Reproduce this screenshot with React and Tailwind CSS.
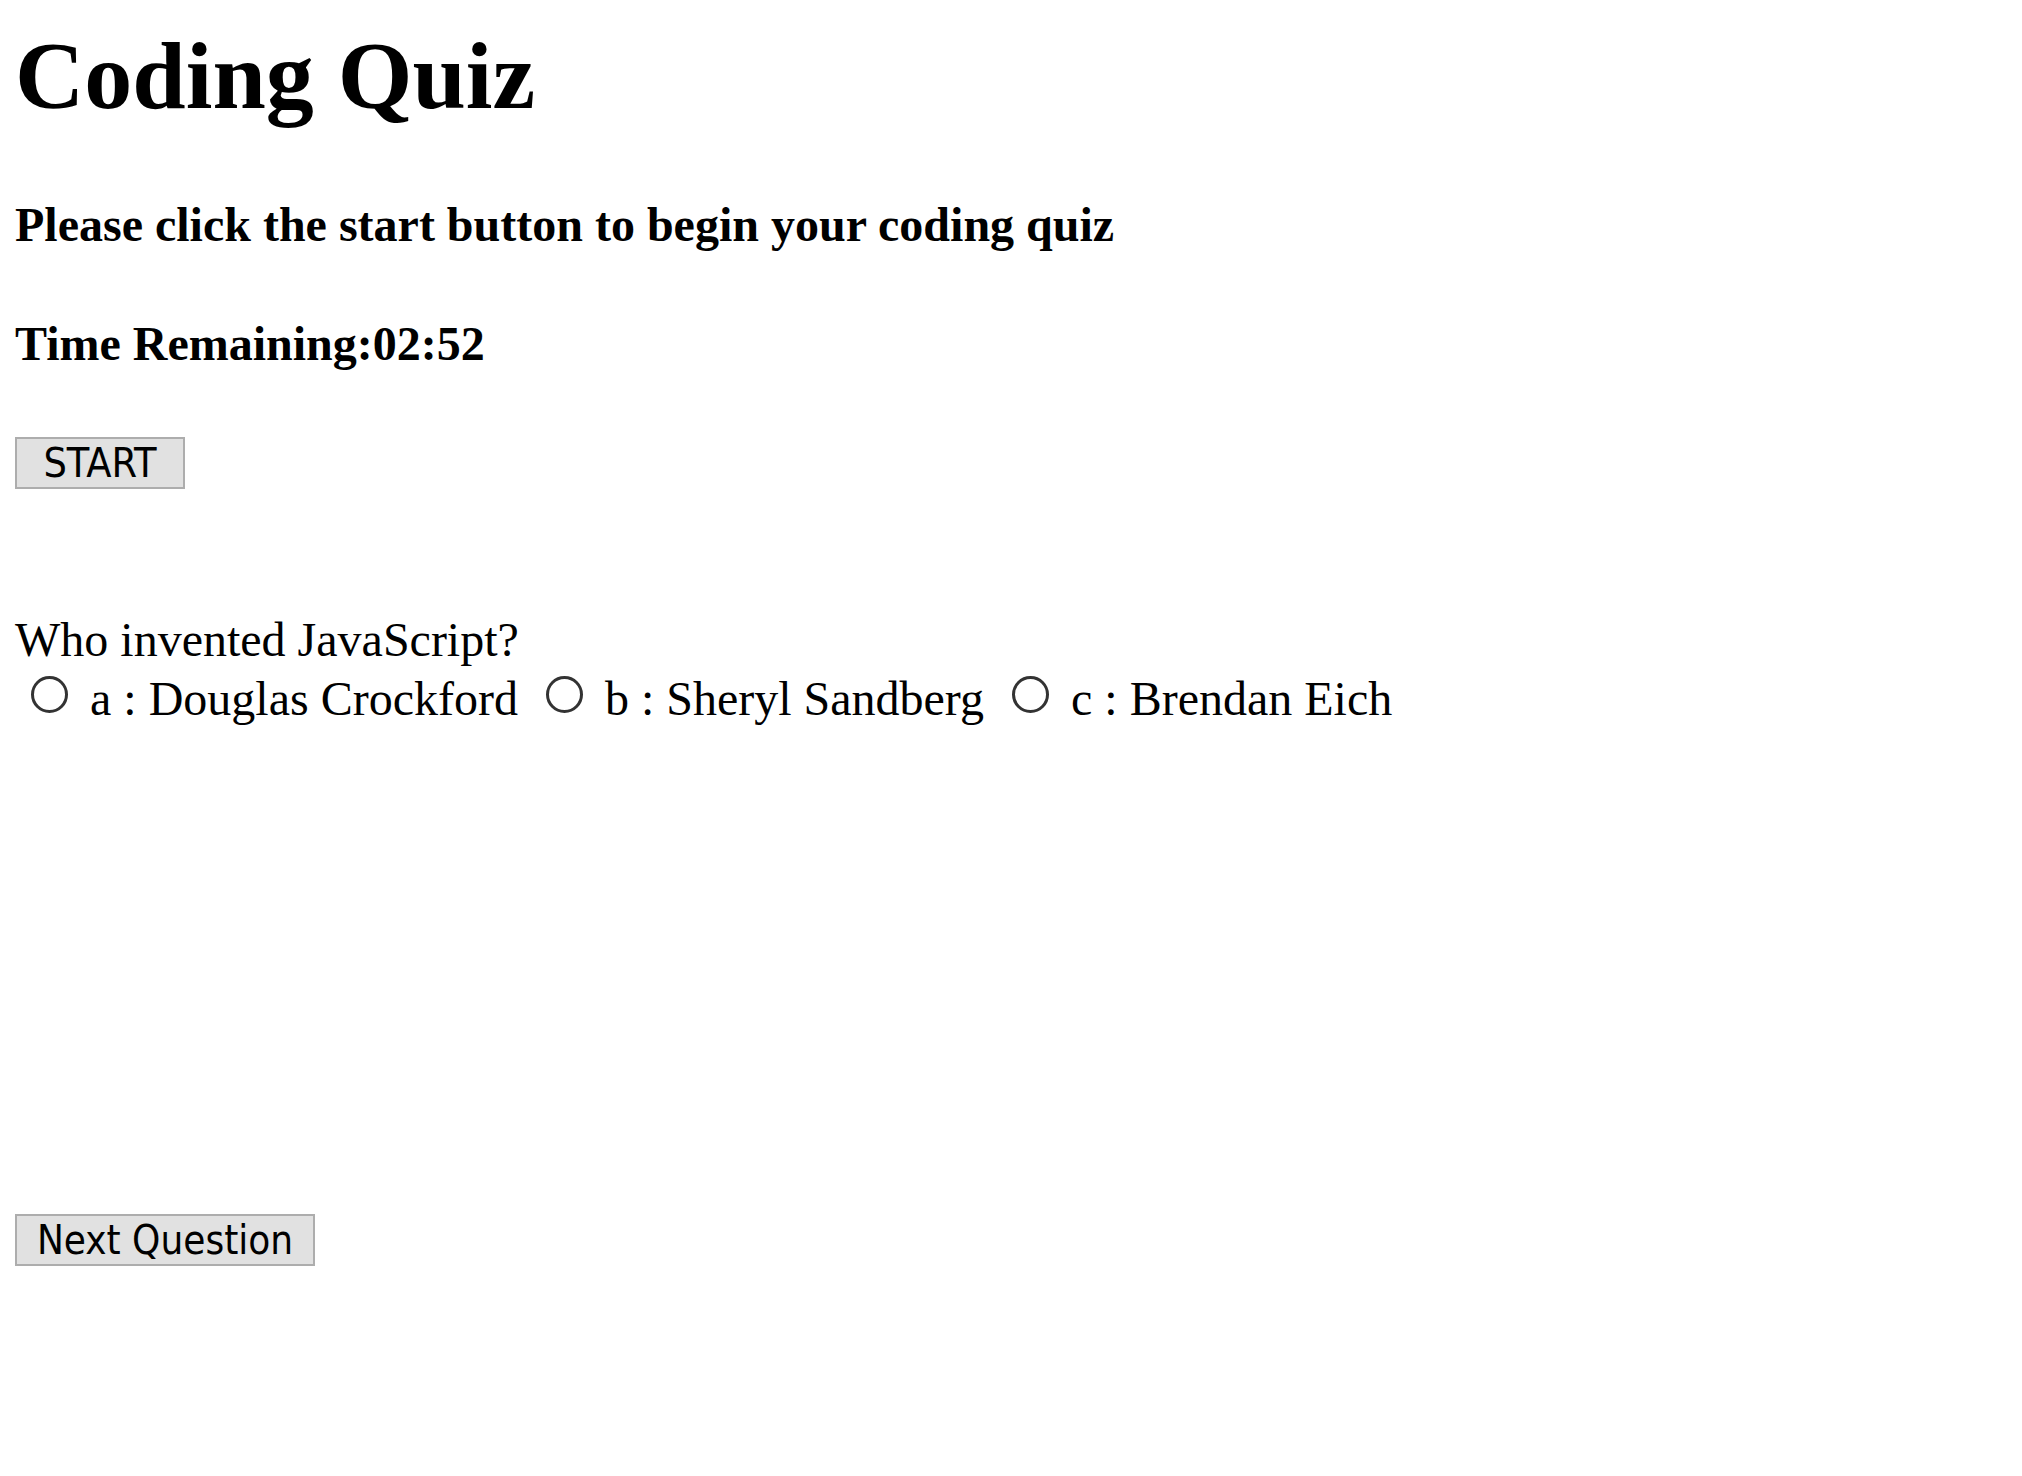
import React from 'react';

const answers = [
  { key: 'a', text: 'Douglas Crockford' },
  { key: 'b', text: 'Sheryl Sandberg' },
  { key: 'c', text: 'Brendan Eich' },
];

export default function App() {
  return (
    <div className="min-h-screen bg-white pl-[15px] pt-[21px] text-black font-['Liberation_Serif','Times_New_Roman',serif]">
      {/* Header */}
      <h1 className="text-[96px] font-bold leading-[110px]">Coding Quiz</h1>
      <h4 className="mt-[66px] text-[48px] font-bold leading-[56px]">
        Please click the start button to begin your coding quiz
      </h4>
      <h4 className="mt-[63px] text-[48px] font-bold leading-[56px]">Time Remaining:02:52</h4>

      <button className="mt-[65px] block w-[170px] h-[52px] bg-[#e1e1e1] border-2 border-[#adadad] text-[41px] leading-none text-black font-['DejaVu_Sans_Condensed','DejaVu_Sans',sans-serif]">
        START
      </button>

      {/* Question */}
      <div className="mt-[121px] text-[48px] leading-[59px]">
        <div>Who invented JavaScript?</div>
        <div className="whitespace-pre">
          {answers.map((a) => (
            <label key={a.key}>
              <input
                type="radio"
                name="answer"
                value={a.key}
                className="appearance-none inline-block align-baseline w-[37px] h-[37px] rounded-full border-[3px] border-[#333] bg-white ml-[16px] mr-[10px] mb-[2px]"
              />
              {` ${a.key} : ${a.text} `}
            </label>
          ))}
        </div>
      </div>

      <button className="mt-[486px] block w-[300px] h-[52px] bg-[#e1e1e1] border-2 border-[#adadad] text-[40px] leading-none text-black font-['DejaVu_Sans_Condensed','DejaVu_Sans',sans-serif]">
        Next Question
      </button>
    </div>
  );
}
